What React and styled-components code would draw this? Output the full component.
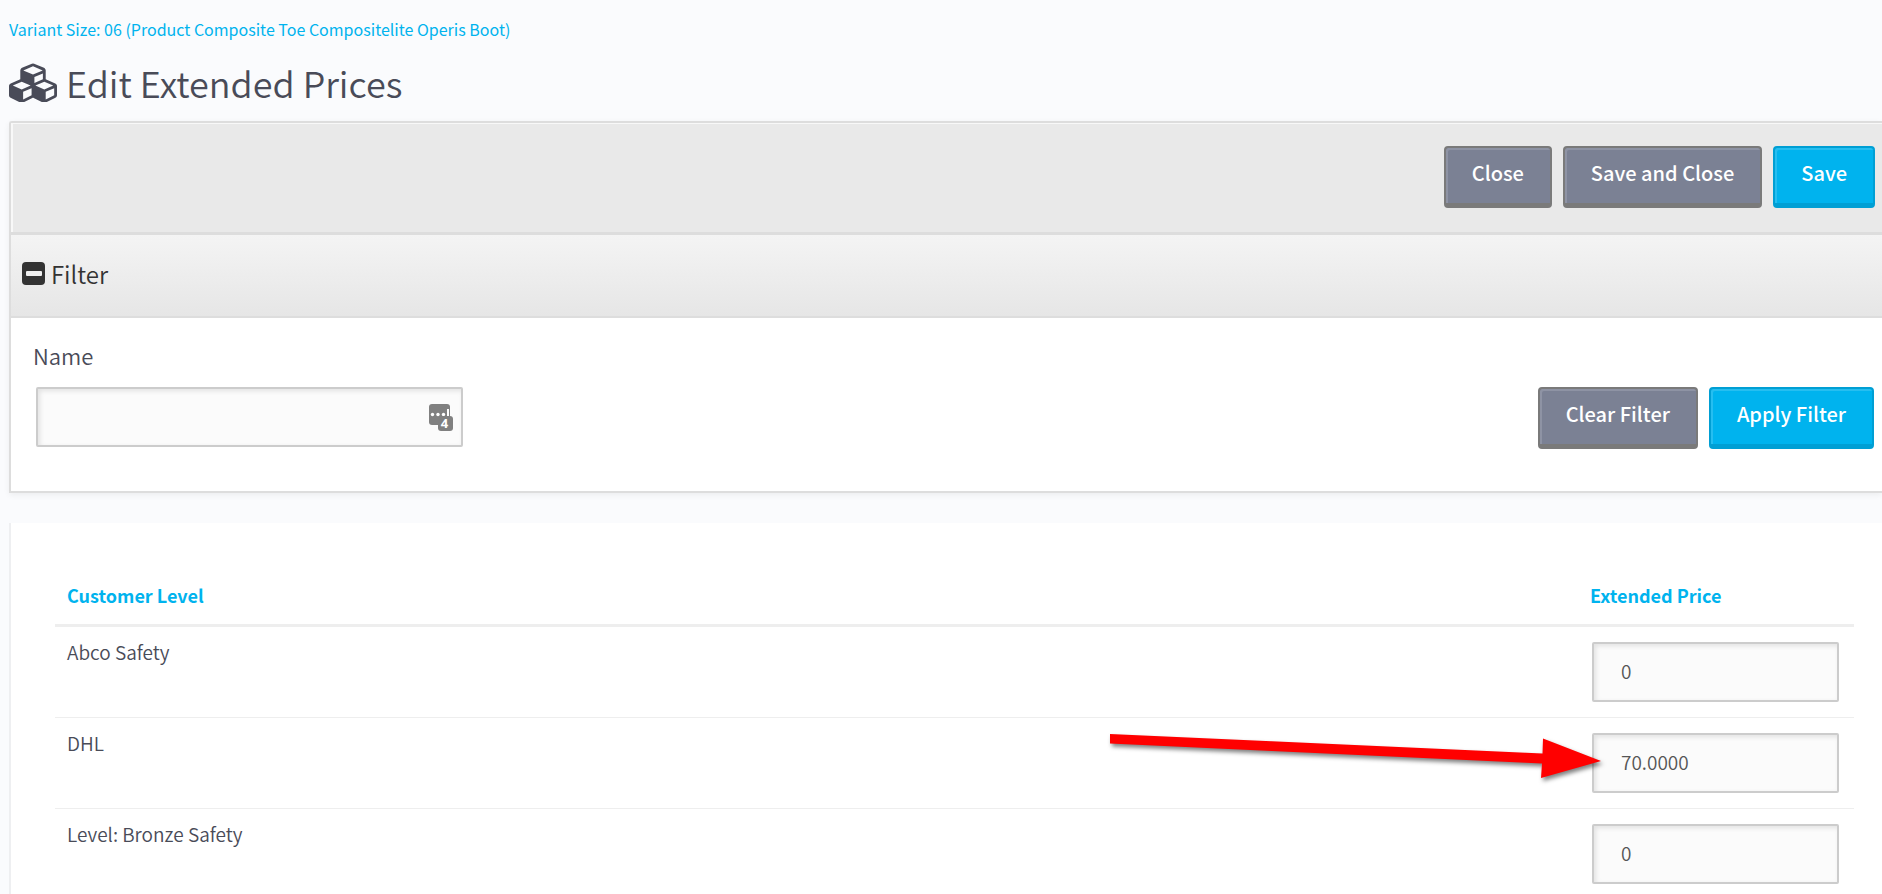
import { useState } from "react";
import styled, { createGlobalStyle } from "styled-components";

const GlobalStyle = createGlobalStyle`
  * {
    box-sizing: border-box;
  }

  html {
    scrollbar-width: none;
  }

  body {
    margin: 0;
    background-color: #fafbfd;
    color: #494b58;
    font-family: "Source Sans Pro", "Noto Sans CJK JP", sans-serif;
    font-size: 19px;
    font-weight: 350;
    line-height: 24px;
  }
`;

const Page = styled.main`
  padding: 17px 0 0 9px;
`;

const Breadcrumb = styled.a`
  display: block;
  color: #00b3ee;
  font-size: 16px;
  font-weight: 400;
  text-decoration: none;
`;

const Title = styled.h1`
  display: flex;
  align-items: center;
  gap: 9px;
  height: 54px;
  margin: 14px 0 12px;
  font-size: 36px;
  font-weight: 350;
  line-height: 54px;
`;

const Panel = styled.section`
  border: 2px solid #ddd;
  border-right: none;
  border-top-left-radius: 3px;
  background-color: #fff;
  box-shadow: 0 2px 6px rgba(0, 0, 0, 0.06);
`;

const Toolbar = styled.div`
  display: flex;
  justify-content: flex-end;
  gap: 11px;
  padding: 23px 7px 24px;
  border-bottom: 3px solid #ddd;
  background-color: #e9e9e9;
  box-shadow: inset 2px 1px 0 #f8f8f8;
`;

const Button = styled.button`
  height: 62px;
  padding: 0 26px 6px;
  border: 2px solid ${(props) => (props.$primary ? "#009fd4" : "#7a7a7a")};
  border-bottom-width: 5px;
  border-radius: 4px;
  background-color: ${(props) => (props.$primary ? "#00b3ee" : "#7b8194")};
  box-shadow: inset 2px 2px 0 rgba(255, 255, 255, 0.15);
  color: #fff;
  font-family: inherit;
  font-size: 20px;
  font-weight: 500;
  cursor: pointer;
`;

const FilterHeader = styled.button`
  display: flex;
  align-items: center;
  gap: 6px;
  width: 100%;
  height: 83px;
  padding: 0 11px 4px;
  border: none;
  border-bottom: 2px solid #ddd;
  background: linear-gradient(#f4f4f4, #e6e6e6);
  color: #333;
  font-family: inherit;
  font-size: 24px;
  font-weight: 350;
  text-align: left;
  cursor: pointer;
`;

const FilterForm = styled.form`
  display: flex;
  justify-content: space-between;
  align-items: flex-end;
  padding: 21px 8px 42px 22px;
`;

const FilterLabel = styled.label`
  display: block;
  margin-bottom: 16px;
  font-size: 22px;
  line-height: 32px;
`;

const FieldWrap = styled.div`
  position: relative;
  width: 427px;
  margin: 0 3px 2px;
`;

const TextField = styled.input`
  display: block;
  width: 100%;
  height: 60px;
  padding: 0 27px 4px;
  border: 2px solid #ccc;
  border-radius: 2px;
  background-color: #fbfbfb;
  box-shadow: inset 2px 2px 5px rgba(0, 0, 0, 0.1);
  color: #555;
  font-family: inherit;
  font-size: 19px;
  font-weight: 350;
`;

const FieldBadge = styled.svg`
  position: absolute;
  top: 17px;
  right: 10px;
`;

const ButtonGroup = styled.div`
  display: flex;
  gap: 11px;
`;

const TablePanel = styled.section`
  margin-top: 30px;
  padding: 49px 28px 0 44px;
  border-left: 2px solid #eeeff1;
  background-color: #fff;
`;

const Table = styled.table`
  width: 100%;
  border-collapse: separate;
  border-spacing: 0;
`;

const HeaderCell = styled.th`
  width: ${(props) => props.$width};
  padding: 11px 12px 17px;
  border-bottom: 3px solid #eee;
  color: #00b3ee;
  font-size: 18px;
  font-weight: 700;
  text-align: left;
`;

const Cell = styled.td`
  position: relative;
  padding: 13px 12px 15px;
  border-bottom: 1px solid #eee;
  vertical-align: top;
`;

const PriceWrap = styled.div`
  margin: 2px 3px 0 2px;
`;

const Arrow = styled.svg`
  position: absolute;
  top: 10px;
  left: -470px;
  pointer-events: none;
  filter: drop-shadow(2px 3px 2px rgba(0, 0, 0, 0.5));
`;

function CubesIcon() {
  return (
    <svg width="48" height="40" viewBox="0 -64 2176 1813" aria-hidden="true">
      <path
        fill="currentColor"
        d="M640 1632l384-192v-314l-384 164v342zm-64-454l404-173-404-173-404 173zm1088 454l384-192v-314l-384 164v342zm-64-454l404-173-404-173-404 173zm-448-293l384-165v-266l-384 164v267zm-64-379l441-189-441-189-441 189zm1088 518v416q0 36-19 67t-52 47l-448 224q-25 14-57 14t-57-14l-448-224q-4-2-7-4-2 2-7 4l-448 224q-25 14-57 14t-57-14l-448-224q-33-16-52-47t-19-67v-416q0-38 21.5-70t56.5-48l434-186v-400q0-38 21.5-70t56.5-48l448-192q23-10 50-10t50 10l448 192q35 16 56.5 48t21.5 70v400l434 186q36 16 57 48t21 70z"
      />
    </svg>
  );
}

function CollapseIcon() {
  return (
    <svg width="23" height="23" viewBox="0 0 23 23" aria-hidden="true">
      <rect width="23" height="23" rx="4" fill="#333" />
      <rect x="4" y="9" width="16" height="5" rx="1" fill="#efefef" />
    </svg>
  );
}

function PasswordBadge() {
  return (
    <FieldBadge width="24" height="28" viewBox="0 0 24 28" aria-hidden="true">
      <rect width="21" height="21" rx="3" fill="#808080" />
      <circle cx="3.5" cy="10.5" r="1.7" fill="#fff" />
      <circle cx="9" cy="10.5" r="1.7" fill="#fff" />
      <circle cx="14.5" cy="10.5" r="1.7" fill="#fff" />
      <rect x="18" y="5" width="2" height="8" fill="#fff" />
      <rect x="9" y="12" width="15" height="15" rx="3" fill="#808080" />
      <text
        x="15.5"
        y="24"
        fill="#fff"
        fontFamily="Open Sans, sans-serif"
        fontSize="13"
        fontWeight="700"
        textAnchor="middle"
      >
        4
      </text>
    </FieldBadge>
  );
}

function PriceArrow() {
  return (
    <Arrow width="500" height="60" viewBox="0 0 500 60" aria-hidden="true">
      <path
        fill="#f00"
        d="M2 6L434.500 25.500L435 10.500L493 33L433 50L434 35.500L2 15.500Z"
      />
    </Arrow>
  );
}

const levels = [
  { id: "abco", name: "Abco Safety", price: "0" },
  { id: "dhl", name: "DHL", price: "70.0000", marked: true },
  { id: "bronze", name: "Level: Bronze Safety", price: "0" },
];

function App() {
  const [open, setOpen] = useState(true);
  return (
    <>
      <GlobalStyle />
      <Page>
        <Breadcrumb href="#variant">
          Variant Size: 06 (Product Composite Toe Compositelite Operis Boot)
        </Breadcrumb>
        <Title>
          <CubesIcon />
          Edit Extended Prices
        </Title>
        <Panel>
          <Toolbar>
            <Button type="button">Close</Button>
            <Button type="button">Save and Close</Button>
            <Button type="button" $primary>
              Save
            </Button>
          </Toolbar>
          <FilterHeader
            type="button"
            aria-expanded={open}
            onClick={() => setOpen(!open)}
          >
            <CollapseIcon />
            Filter
          </FilterHeader>
          {open && (
            <FilterForm onSubmit={(e) => e.preventDefault()}>
              <div>
                <FilterLabel htmlFor="name">Name</FilterLabel>
                <FieldWrap>
                  <TextField id="name" type="text" />
                  <PasswordBadge />
                </FieldWrap>
              </div>
              <ButtonGroup>
                <Button type="reset">Clear Filter</Button>
                <Button type="submit" $primary>
                  Apply Filter
                </Button>
              </ButtonGroup>
            </FilterForm>
          )}
        </Panel>
        <TablePanel>
          <Table>
            <thead>
              <tr>
                <HeaderCell>Customer Level</HeaderCell>
                <HeaderCell $width="276px">Extended Price</HeaderCell>
              </tr>
            </thead>
            <tbody>
              {levels.map((level) => (
                <tr key={level.id}>
                  <Cell>
                    <label htmlFor={level.id}>{level.name}</label>
                  </Cell>
                  <Cell>
                    <PriceWrap>
                      <TextField
                        id={level.id}
                        type="text"
                        defaultValue={level.price}
                      />
                    </PriceWrap>
                    {level.marked && <PriceArrow />}
                  </Cell>
                </tr>
              ))}
            </tbody>
          </Table>
        </TablePanel>
      </Page>
    </>
  );
}

export default App;
